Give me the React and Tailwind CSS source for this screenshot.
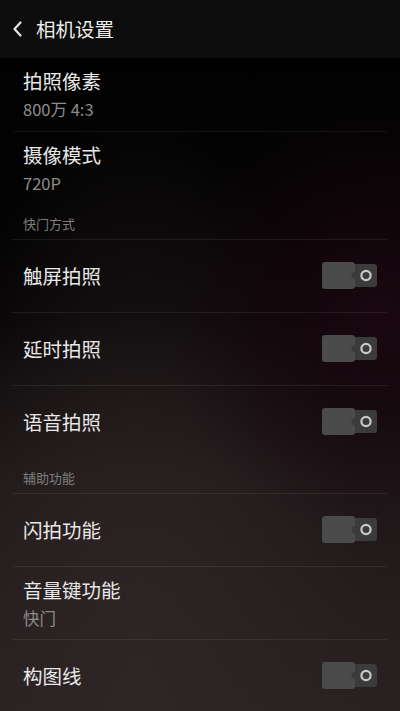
import React from 'react';

const font = { fontFamily: '"Noto Sans CJK SC", "Noto Sans", sans-serif' };

function Toggle() {
  return (
    <svg width="56" height="28" viewBox="0 0 56 28" className="shrink-0">
      <rect x="30" y="2" width="25" height="23" rx="3" fill="#3b3b3b" />
      <rect x="0" y="0" width="33" height="27" rx="3" fill="#4b4b4b" />
      <circle cx="33" cy="13.5" r="3.5" fill="#3b3b3b" />
      <circle cx="44" cy="13.5" r="4.6" fill="none" stroke="#c8c8c8" strokeWidth="2.2" />
    </svg>
  );
}

function Item({ label, sub, toggle, border = true }) {
  return (
    <div className={`h-[73px] flex items-center justify-between pl-[10px] pr-[9px] ${border ? 'border-t border-[#ffffff14]' : ''}`}>
      <div className="flex flex-col gap-[6px]">
        <div className="text-[19.5px] leading-[24px] text-[#e8e8e8]">{label}</div>
        {sub && <div className="text-[16.5px] leading-[21px] text-[#8c8c8c]">{sub}</div>}
      </div>
      {toggle && <Toggle />}
    </div>
  );
}

function SectionHeader({ title }) {
  return (
    <div className="h-[35px] pl-[10px] pt-[12px] text-[13px] leading-[16px] text-[#7e7e7e]">
      {title}
    </div>
  );
}

export default function App() {
  return (
    <div
      className="w-[400px] h-[711px] overflow-hidden bg-[#070506] flex flex-col"
      style={font}
    >
      <div className="h-[58px] shrink-0 bg-[#0d0d0d] flex items-center pl-[12px] gap-[13px]">
        <svg width="11" height="16" viewBox="0 0 11 16">
          <path d="M8.5 1.5 L2.5 8 L8.5 14.5" fill="none" stroke="#e6e6e6" strokeWidth="2.2" strokeLinecap="round" strokeLinejoin="round" />
        </svg>
        <div className="text-[19.5px] leading-[24px] text-[#ececec]">相机设置</div>
      </div>
      <div className="flex-1 px-[13px] bg-[radial-gradient(ellipse_at_95%_40%,#1a0810_0%,transparent_40%),radial-gradient(ellipse_at_35%_100%,#2e2626_0%,transparent_65%),linear-gradient(to_bottom,#020202_0%,#050304_40%,#1e1718_65%,#2a2222_100%)]">
        <Item label="拍照像素" sub="800万 4:3" border={false} />
        <Item label="摄像模式" sub="720P" />
        <SectionHeader title="快门方式" />
        <Item label="触屏拍照" toggle />
        <Item label="延时拍照" toggle />
        <Item label="语音拍照" toggle />
        <SectionHeader title="辅助功能" />
        <Item label="闪拍功能" toggle />
        <Item label="音量键功能" sub="快门" />
        <Item label="构图线" toggle />
      </div>
    </div>
  );
}
